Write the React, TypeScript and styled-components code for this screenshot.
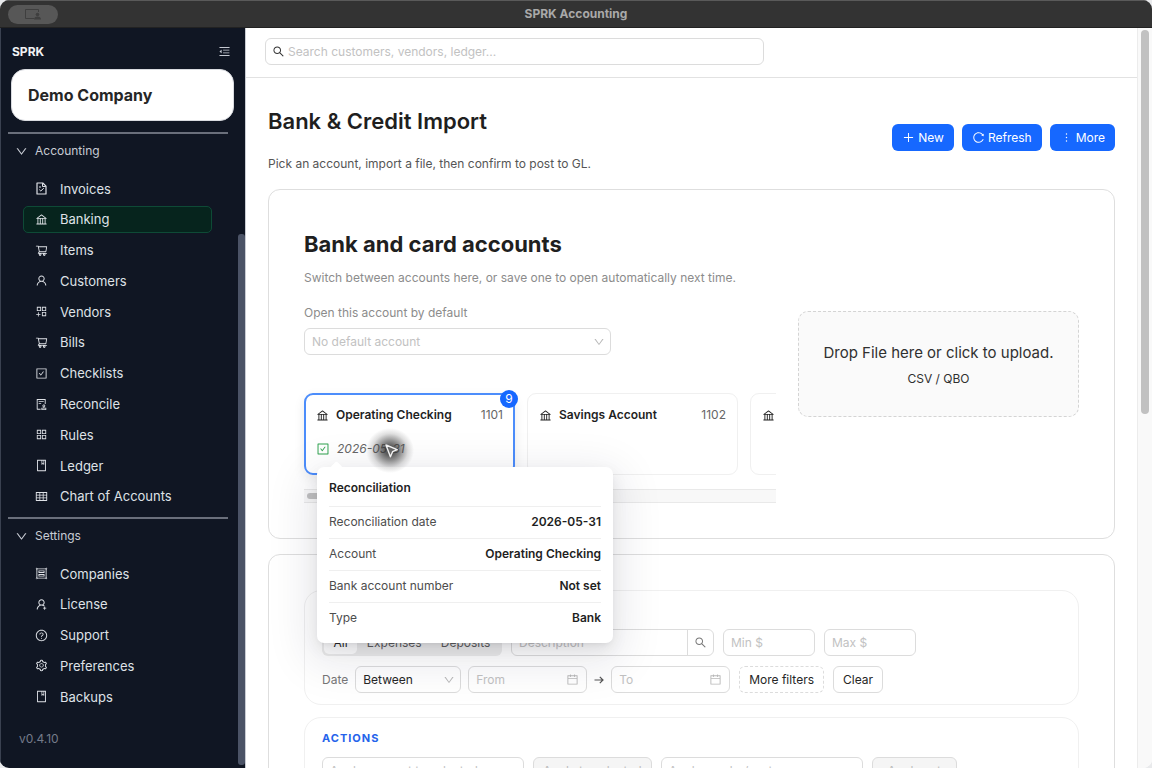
import React from "react";
import styled, { createGlobalStyle, css } from "styled-components";
import {
  AiOutlineAppstore,
  AiOutlineAppstoreAdd,
  AiOutlineAudit,
  AiOutlineBank,
  AiOutlineBook,
  AiOutlineCalendar,
  AiOutlineCheckSquare,
  AiOutlineDown,
  AiOutlineGroup,
  AiOutlineMenuFold,
  AiOutlineMore,
  AiOutlinePlus,
  AiOutlineQuestionCircle,
  AiOutlineReload,
  AiOutlineSearch,
  AiOutlineSetting,
  AiOutlineShoppingCart,
  AiOutlineTable,
  AiOutlineUser,
  AiOutlineUserAdd,
} from "react-icons/ai";

const GlobalStyle = createGlobalStyle`
  *, *::before, *::after { box-sizing: border-box; }
  body {
    margin: 0;
    background: #e9eaec;
    font-family: Inter, "Liberation Sans", sans-serif;
    font-size: 12px;
    line-height: 20px;
    color: #1f1f1f;
  }
  h1, h2, h3, p, ul, dl, dd { margin: 0; padding: 0; }
  ul { list-style: none; }
  button, input, select { font: inherit; color: inherit; margin: 0; }
  button { cursor: pointer; }
`;

const Window = styled.div`
  display: flex;
  flex-direction: column;
  height: 100vh;
  overflow: hidden;
  border-radius: 9px;
  background: #fff;
`;

const TitleBar = styled.header`
  display: flex;
  align-items: center;
  flex: none;
  height: 28px;
  padding: 0 8px;
  background: #333;
  border-top: 1px solid #5a5a5a;
  border-bottom: 1px solid #222;
`;

const TitleSide = styled.div`
  flex: 1;
  display: flex;
`;

const SharePill = styled.span`
  display: flex;
  align-items: center;
  justify-content: center;
  width: 50px;
  height: 19px;
  border-radius: 10px;
  background: #575757;
  color: #3f3f3f;
`;

const WindowTitle = styled.span`
  font-size: 12px;
  font-weight: 700;
  color: #a9a9a9;
`;

const Body = styled.div`
  display: flex;
  flex: 1;
  min-height: 0;
`;

const Sidebar = styled.aside`
  display: flex;
  flex: none;
  width: 246px;
  background: #101623;
  color: #d9dce2;
  border-left: 1px solid #3a4150;
  border-right: 1px solid #c9ccd3;
`;

const SidebarMain = styled.div`
  flex: 1;
  min-width: 0;
`;

const SidebarTop = styled.div`
  display: flex;
  align-items: center;
  justify-content: space-between;
  height: 41px;
  padding: 6px 5px 0 11px;
`;

const Brand = styled.span`
  font-weight: 700;
  color: #f1f2f4;
`;

const IconButton = styled.button`
  display: flex;
  padding: 2px;
  border: 0;
  background: none;
  color: #c5c9d1;
`;

const CompanyCard = styled.button`
  display: block;
  width: 223px;
  height: 52px;
  margin: 0 0 11px 10px;
  padding: 0 16px;
  border: 1px solid #d9dbe0;
  border-radius: 14px;
  background: #fff;
  color: #262626;
  font-size: 16px;
  font-weight: 700;
  text-align: left;
`;

const NavDivider = styled.hr`
  height: 2px;
  margin: 0 10px 0 7px;
  border: 0;
  background: #6a6f7b;
`;

const NavGroup = styled.section`
  padding-bottom: 7px;
`;

const GroupToggle = styled.button`
  display: flex;
  align-items: center;
  gap: 7px;
  height: 34px;
  padding: 0 14px;
  border: 0;
  background: none;
  color: #c8ccd4;
`;

const NavList = styled.ul<{ $height: number }>`
  display: flex;
  flex-direction: column;
  justify-content: space-between;
  height: ${(p) => p.$height}px;
  margin: 7px 26px 0 22px;
`;

const NavLink = styled.a<{ $active?: boolean }>`
  display: flex;
  align-items: center;
  gap: 12px;
  height: 27px;
  padding: 0 11px;
  border: 1px solid transparent;
  border-radius: 5px;
  font-size: 13px;
  color: #dfe2e7;
  text-decoration: none;
  ${(p) =>
    p.$active &&
    css`
      background: #06241d;
      border-color: #0e4a36;
    `}
`;

const Version = styled.p`
  padding: 12px 18px 0;
  font-size: 12px;
  color: #747b8a;
`;

const SideTrack = styled.div`
  flex: none;
  width: 7px;
  padding: 206px 0 3px;
  display: flex;
`;

const SideThumb = styled.div`
  flex: 1;
  border-radius: 3px;
  background: #4b5366;
`;

const Main = styled.main`
  flex: 1;
  min-width: 0;
  overflow: hidden;
`;

const MainTrack = styled.div`
  flex: none;
  width: 15px;
  padding: 2px 3px 0;
  border-left: 1px solid #ececec;
  background: #f9f9f9;
`;

const MainThumb = styled.div`
  height: 52%;
  border-radius: 4px;
  background: #c1c1c1;
`;

const SearchBar = styled.div`
  height: 50px;
  padding: 10px 19px;
  border-bottom: 1px solid #e2e2e2;
`;

const field = css`
  height: 27px;
  border: 1px solid #dcdcdc;
  border-radius: 6px;
  background: #fff;
`;

const SearchField = styled.label`
  ${field}
  display: flex;
  align-items: center;
  gap: 3px;
  max-width: 499px;
  padding: 0 6px;
  color: #333;
`;

const BareInput = styled.input`
  flex: 1;
  width: 100%;
  min-width: 0;
  padding: 0;
  border: 0;
  outline: 0;
  background: none;
  &::placeholder {
    color: #c2c2c2;
    opacity: 1;
  }
`;

const Page = styled.div`
  padding: 27px 22px;
`;

const PageHead = styled.div`
  display: flex;
  justify-content: space-between;
  align-items: flex-start;
`;

const PageTitle = styled.h1`
  font-size: 22px;
  line-height: 32px;
  font-weight: 600;
`;

const PageNote = styled.p`
  margin-top: 17px;
  color: #555;
`;

const HeadButtons = styled.div`
  display: flex;
  gap: 8px;
  padding-top: 19px;
`;

const PrimaryButton = styled.button`
  display: flex;
  align-items: center;
  gap: 3px;
  height: 27px;
  padding: 0 10px;
  border: 0;
  border-radius: 6px;
  background: #1668ff;
  color: #fff;
`;

const Card = styled.section`
  margin-top: 15px;
  padding: 35px;
  border: 1px solid #dedede;
  border-radius: 12px;
  background: #fff;
`;

const AccountsLayout = styled.div`
  display: flex;
  align-items: center;
  gap: 22px;
`;

const AccountsColumn = styled.div`
  flex: 1;
  min-width: 0;
`;

const CardTitle = styled.h2`
  padding-top: 3px;
  font-size: 22px;
  line-height: 32px;
  font-weight: 700;
`;

const Muted = styled.p`
  margin-top: 8px;
  color: #8c8c8c;
`;

const FieldLabel = styled.label`
  display: block;
  margin: 15px 0 5px;
  color: #8c8c8c;
`;

const SelectWrap = styled.span<{ $width: number }>`
  position: relative;
  display: block;
  flex: none;
  width: ${(p) => p.$width}px;
  > svg {
    position: absolute;
    right: 6px;
    top: 8px;
    color: #b8b8b8;
    pointer-events: none;
  }
`;

const Select = styled.select<{ $empty?: boolean }>`
  ${field}
  display: block;
  width: 100%;
  padding: 0 24px 0 7px;
  appearance: none;
  color: ${(p) => (p.$empty ? "#c2c2c2" : "#262626")};
`;

const StripAnchor = styled.div`
  position: relative;
  margin-top: 28px;
`;

const Strip = styled.div`
  display: flex;
  gap: 12px;
  overflow: hidden;
  margin: 0 0 0 -10px;
  padding: 10px 0 14px 10px;
`;

const AccountCard = styled.article<{ $selected?: boolean }>`
  position: relative;
  flex: none;
  width: 211px;
  height: 82px;
  padding: 11px;
  border: 1px solid #f0f0f0;
  border-radius: 9px;
  background: #fff;
  ${(p) =>
    p.$selected &&
    css`
      padding: 10px;
      border: 2px solid #4c8dfb;
      box-shadow: 0 4px 12px rgba(0, 0, 0, 0.08);
    `}
`;

const AccountRow = styled.div`
  display: flex;
  align-items: center;
  gap: 7px;
  min-height: 20px;
`;

const AccountName = styled.h3`
  flex: 1;
  font-size: 12px;
  line-height: 20px;
  font-weight: 600;
`;

const AccountCode = styled.span`
  color: #666;
`;

const ReconcileRow = styled(AccountRow)`
  margin-top: 14px;
  color: #666;
  font-style: italic;
  > svg {
    color: #2fa24f;
  }
`;

const Badge = styled.span`
  position: absolute;
  top: -5px;
  right: -5px;
  width: 18px;
  height: 18px;
  border-radius: 9px;
  background: #1668ff;
  color: #fff;
  line-height: 18px;
  text-align: center;
`;

const StripTrack = styled.div`
  display: flex;
  height: 14px;
  padding: 3px;
  border: solid #e9e9e9;
  border-width: 1px 0;
  background: #f8f8f8;
`;

const StripThumb = styled.div`
  width: 60%;
  border-radius: 4px;
  background: #c1c1c1;
`;

const Popover = styled.div`
  position: absolute;
  z-index: 2;
  top: 84px;
  left: 13px;
  width: 296px;
  padding: 7px 12px 9px;
  border-radius: 7px;
  background: #fff;
  box-shadow:
    0 6px 16px rgba(0, 0, 0, 0.08),
    0 3px 6px -4px rgba(0, 0, 0, 0.12),
    0 12px 44px 10px rgba(20, 25, 50, 0.09);
  &::before {
    content: "";
    position: absolute;
    top: -4px;
    left: 15px;
    width: 9px;
    height: 9px;
    border-radius: 2px;
    background: #fff;
    transform: rotate(45deg);
  }
`;

const PopoverTitle = styled.h3`
  padding: 4px 0 8px;
  font-size: 12px;
  line-height: 20px;
  font-weight: 600;
`;

const DetailRow = styled.div`
  display: flex;
  justify-content: space-between;
  height: 32px;
  padding-top: 5px;
  border-top: 1px solid #efefef;
  dt {
    color: #4d4d4d;
  }
  dd {
    font-weight: 600;
  }
`;

const Pointer = styled.div`
  position: absolute;
  z-index: 3;
  top: 45px;
  left: 62px;
  display: flex;
  padding: 15px 15px 14px 18px;
  background: radial-gradient(
    closest-side,
    rgba(50, 50, 50, 0.8) 20%,
    rgba(60, 60, 60, 0.55) 45%,
    rgba(80, 80, 80, 0.18) 75%,
    rgba(90, 90, 90, 0)
  );
`;

const DropZone = styled.button`
  display: flex;
  flex-direction: column;
  align-items: center;
  gap: 4px;
  flex: none;
  width: 281px;
  padding: 29px 12px 27px;
  border: 1px dashed #d4d4d4;
  border-radius: 10px;
  background: #fafafa;
  color: #303030;
`;

const DropTitle = styled.span`
  font-size: 15px;
  line-height: 24px;
`;

const Panel = styled.div`
  padding: 12px 17px;
  border: 1px solid #f0f0f0;
  border-radius: 17px;
  & + & {
    margin-top: 12px;
    padding-top: 10px;
  }
`;

const FilterPanel = styled(Panel)`
  padding-top: 38px;
  padding-bottom: 11px;
`;

const FilterRow = styled.div`
  display: flex;
  align-items: center;
  gap: 9px;
  & + & {
    margin-top: 10px;
  }
`;

const DateGroup = styled.div`
  display: flex;
  align-items: center;
  gap: 7px;
`;

const DateLabel = styled.label`
  color: #777;
`;

const Segmented = styled.div`
  display: flex;
  width: 180px;
  height: 27px;
  padding: 2px;
  border-radius: 6px;
  background: #ececec;
`;

const Segment = styled.button<{ $active?: boolean }>`
  flex: 1 1 auto;
  padding: 0 9px;
  border: 0;
  border-radius: 5px;
  line-height: 23px;
  background: ${(p) => (p.$active ? "#fff" : "transparent")};
  color: ${(p) => (p.$active ? "#262626" : "#5c5c5c")};
`;

const SearchGroup = styled.div`
  ${field}
  display: flex;
  width: 203px;
  padding-left: 7px;
`;

const SearchButton = styled.button`
  display: flex;
  align-items: center;
  justify-content: center;
  width: 26px;
  padding: 0;
  border: 0;
  border-left: 1px solid #dcdcdc;
  background: none;
  color: #777;
`;

const InputBox = styled.label<{ $width: number }>`
  ${field}
  display: flex;
  align-items: center;
  flex: none;
  width: ${(p) => p.$width}px;
  padding: 0 7px;
  color: #b8b8b8;
`;

const Button = styled.button<{ $dashed?: boolean }>`
  ${field}
  padding: 0 9px;
  border-style: ${(p) => (p.$dashed ? "dashed" : "solid")};
  color: #262626;
  &:disabled {
    min-width: 85px;
    background: #f5f5f5;
    color: #bdbdbd;
  }
`;

const SectionLabel = styled.h3`
  margin-bottom: 9px;
  font-size: 11px;
  line-height: 20px;
  font-weight: 700;
  letter-spacing: 1px;
  color: #2563eb;
`;

const Sep = styled.span`
  display: flex;
  color: #555;
`;

const ShareIcon = () => (
  <svg width="18" height="12" viewBox="0 0 18 12" fill="none" stroke="currentColor" strokeWidth="1">
    <path d="M10 10.5H1.5V1.5H14.5V4" />
    <circle cx="13.5" cy="6.5" r="1.8" fill="currentColor" stroke="none" />
    <path d="M10 11.5c0-2 1.5-3 3.5-3s3.5 1 3.5 3z" fill="currentColor" stroke="none" />
  </svg>
);

const InvoiceIcon = ({ size = 13 }: { size?: number }) => (
  <svg width={size} height={size} viewBox="0 0 13 13" fill="none" stroke="currentColor">
    <path d="M2 1H7.8L11 4.2V12H2Z" strokeWidth="1.2" strokeLinejoin="round" />
    <path d="M7.5 1.2V4.5H10.8" strokeWidth="1" />
    <path d="M4 5H6M4.3 7.6L5.8 9L8.8 6.2" strokeWidth="1" />
  </svg>
);

const ArrowIcon = () => (
  <svg width="10" height="10" viewBox="0 0 10 10" fill="none" stroke="currentColor" strokeWidth="1.2">
    <path d="M0.5 5H9M5.8 1.8L9 5L5.8 8.2" />
  </svg>
);

const CursorIcon = () => (
  <svg width="15" height="16" viewBox="0 0 15 16">
    <path
      d="M2 2L13.2 6.6L8.6 8.7L6.4 13.8Z"
      fill="#666"
      stroke="#f2f2f2"
      strokeWidth="1.4"
      strokeLinejoin="round"
    />
  </svg>
);

type NavItem = { label: string; Icon: React.ComponentType<{ size?: number }>; active?: boolean };

const accounting: NavItem[] = [
  { label: "Invoices", Icon: InvoiceIcon },
  { label: "Banking", Icon: AiOutlineBank, active: true },
  { label: "Items", Icon: AiOutlineShoppingCart },
  { label: "Customers", Icon: AiOutlineUser },
  { label: "Vendors", Icon: AiOutlineAppstoreAdd },
  { label: "Bills", Icon: AiOutlineShoppingCart },
  { label: "Checklists", Icon: AiOutlineCheckSquare },
  { label: "Reconcile", Icon: AiOutlineAudit },
  { label: "Rules", Icon: AiOutlineAppstore },
  { label: "Ledger", Icon: AiOutlineBook },
  { label: "Chart of Accounts", Icon: AiOutlineTable },
];

const settings: NavItem[] = [
  { label: "Companies", Icon: AiOutlineGroup },
  { label: "License", Icon: AiOutlineUserAdd },
  { label: "Support", Icon: AiOutlineQuestionCircle },
  { label: "Preferences", Icon: AiOutlineSetting },
  { label: "Backups", Icon: AiOutlineBook },
];

const details = [
  ["Reconciliation date", "2026-05-31"],
  ["Account", "Operating Checking"],
  ["Bank account number", "Not set"],
  ["Type", "Bank"],
];

function Nav({ title, items, height }: { title: string; items: NavItem[]; height: number }) {
  return (
    <NavGroup>
      <NavDivider />
      <GroupToggle>
        <AiOutlineDown size={13} />
        {title}
      </GroupToggle>
      <NavList $height={height}>
        {items.map(({ label, Icon, active }) => (
          <li key={label}>
            <NavLink href="#" $active={active} aria-current={active ? "page" : undefined}>
              <Icon size={13} />
              {label}
            </NavLink>
          </li>
        ))}
      </NavList>
    </NavGroup>
  );
}

function Dropdown({
  id,
  label,
  value,
  width,
  empty,
}: {
  id: string;
  label?: string;
  value: string;
  width: number;
  empty?: boolean;
}) {
  return (
    <SelectWrap $width={width}>
      <Select id={id} aria-label={label} $empty={empty}>
        <option>{value}</option>
      </Select>
      <AiOutlineDown size={12} />
    </SelectWrap>
  );
}

export default function App() {
  return (
    <>
      <GlobalStyle />
      <Window>
        <TitleBar>
          <TitleSide>
            <SharePill>
              <ShareIcon />
            </SharePill>
          </TitleSide>
          <WindowTitle>SPRK Accounting</WindowTitle>
          <TitleSide />
        </TitleBar>
        <Body>
          <Sidebar>
            <SidebarMain>
              <SidebarTop>
                <Brand>SPRK</Brand>
                <IconButton aria-label="Collapse menu">
                  <AiOutlineMenuFold size={13} />
                </IconButton>
              </SidebarTop>
              <CompanyCard>Demo Company</CompanyCard>
              <Nav title="Accounting" items={accounting} height={335} />
              <Nav title="Settings" items={settings} height={150} />
              <Version>v0.4.10</Version>
            </SidebarMain>
            <SideTrack>
              <SideThumb />
            </SideTrack>
          </Sidebar>
          <Main>
            <SearchBar>
              <SearchField>
                <AiOutlineSearch size={13} />
                <BareInput aria-label="Search" placeholder="Search customers, vendors, ledger..." />
              </SearchField>
            </SearchBar>
            <Page>
              <PageHead>
                <div>
                  <PageTitle>Bank &amp; Credit Import</PageTitle>
                  <PageNote>Pick an account, import a file, then confirm to post to GL.</PageNote>
                </div>
                <HeadButtons>
                  <PrimaryButton>
                    <AiOutlinePlus size={13} />
                    New
                  </PrimaryButton>
                  <PrimaryButton>
                    <AiOutlineReload size={13} />
                    Refresh
                  </PrimaryButton>
                  <PrimaryButton>
                    <AiOutlineMore size={13} />
                    More
                  </PrimaryButton>
                </HeadButtons>
              </PageHead>
              <Card>
                <AccountsLayout>
                  <AccountsColumn>
                    <CardTitle>Bank and card accounts</CardTitle>
                    <Muted>Switch between accounts here, or save one to open automatically next time.</Muted>
                    <FieldLabel htmlFor="default-account">Open this account by default</FieldLabel>
                    <Dropdown id="default-account" value="No default account" width={307} empty />
                    <StripAnchor>
                      <Strip>
                        <AccountCard $selected>
                          <AccountRow>
                            <AiOutlineBank size={13} />
                            <AccountName>Operating Checking</AccountName>
                            <AccountCode>1101</AccountCode>
                          </AccountRow>
                          <ReconcileRow>
                            <AiOutlineCheckSquare size={14} />
                            2026-05-31
                          </ReconcileRow>
                          <Badge>9</Badge>
                        </AccountCard>
                        <AccountCard>
                          <AccountRow>
                            <AiOutlineBank size={13} />
                            <AccountName>Savings Account</AccountName>
                            <AccountCode>1102</AccountCode>
                          </AccountRow>
                        </AccountCard>
                        <AccountCard>
                          <AccountRow>
                            <AiOutlineBank size={13} />
                          </AccountRow>
                        </AccountCard>
                      </Strip>
                      <StripTrack>
                        <StripThumb />
                      </StripTrack>
                      <Popover role="tooltip">
                        <PopoverTitle>Reconciliation</PopoverTitle>
                        <dl>
                          {details.map(([term, value]) => (
                            <DetailRow key={term}>
                              <dt>{term}</dt>
                              <dd>{value}</dd>
                            </DetailRow>
                          ))}
                        </dl>
                      </Popover>
                      <Pointer>
                        <CursorIcon />
                      </Pointer>
                    </StripAnchor>
                  </AccountsColumn>
                  <DropZone>
                    <DropTitle>Drop File here or click to upload.</DropTitle>
                    <span>CSV / QBO</span>
                  </DropZone>
                </AccountsLayout>
              </Card>
              <Card>
                <FilterPanel>
                  <FilterRow>
                    <Segmented>
                      <Segment $active>All</Segment>
                      <Segment>Expenses</Segment>
                      <Segment>Deposits</Segment>
                    </Segmented>
                    <SearchGroup>
                      <BareInput aria-label="Description" placeholder="Description" />
                      <SearchButton aria-label="Search transactions">
                        <AiOutlineSearch size={13} />
                      </SearchButton>
                    </SearchGroup>
                    <InputBox $width={92}>
                      <BareInput aria-label="Minimum amount" placeholder="Min $" />
                    </InputBox>
                    <InputBox $width={92}>
                      <BareInput aria-label="Maximum amount" placeholder="Max $" />
                    </InputBox>
                  </FilterRow>
                  <FilterRow>
                    <DateGroup>
                      <DateLabel htmlFor="date-mode">Date</DateLabel>
                      <Dropdown id="date-mode" value="Between" width={106} />
                      <InputBox $width={119}>
                        <BareInput aria-label="From" placeholder="From" />
                        <AiOutlineCalendar size={13} />
                      </InputBox>
                      <Sep>
                        <ArrowIcon />
                      </Sep>
                      <InputBox $width={119}>
                        <BareInput aria-label="To" placeholder="To" />
                        <AiOutlineCalendar size={13} />
                      </InputBox>
                    </DateGroup>
                    <Button $dashed>More filters</Button>
                    <Button>Clear</Button>
                  </FilterRow>
                </FilterPanel>
                <Panel>
                  <SectionLabel>ACTIONS</SectionLabel>
                  <FilterRow>
                    <Dropdown id="bulk-account" label="Account" value="Apply account to selected..." width={202} empty />
                    <Button disabled>Apply to selected</Button>
                    <Dropdown id="bulk-vendor" label="Vendor" value="Apply vendor/customer..." width={202} empty />
                    <Button disabled>Apply set</Button>
                  </FilterRow>
                </Panel>
              </Card>
            </Page>
          </Main>
          <MainTrack>
            <MainThumb />
          </MainTrack>
        </Body>
      </Window>
    </>
  );
}
